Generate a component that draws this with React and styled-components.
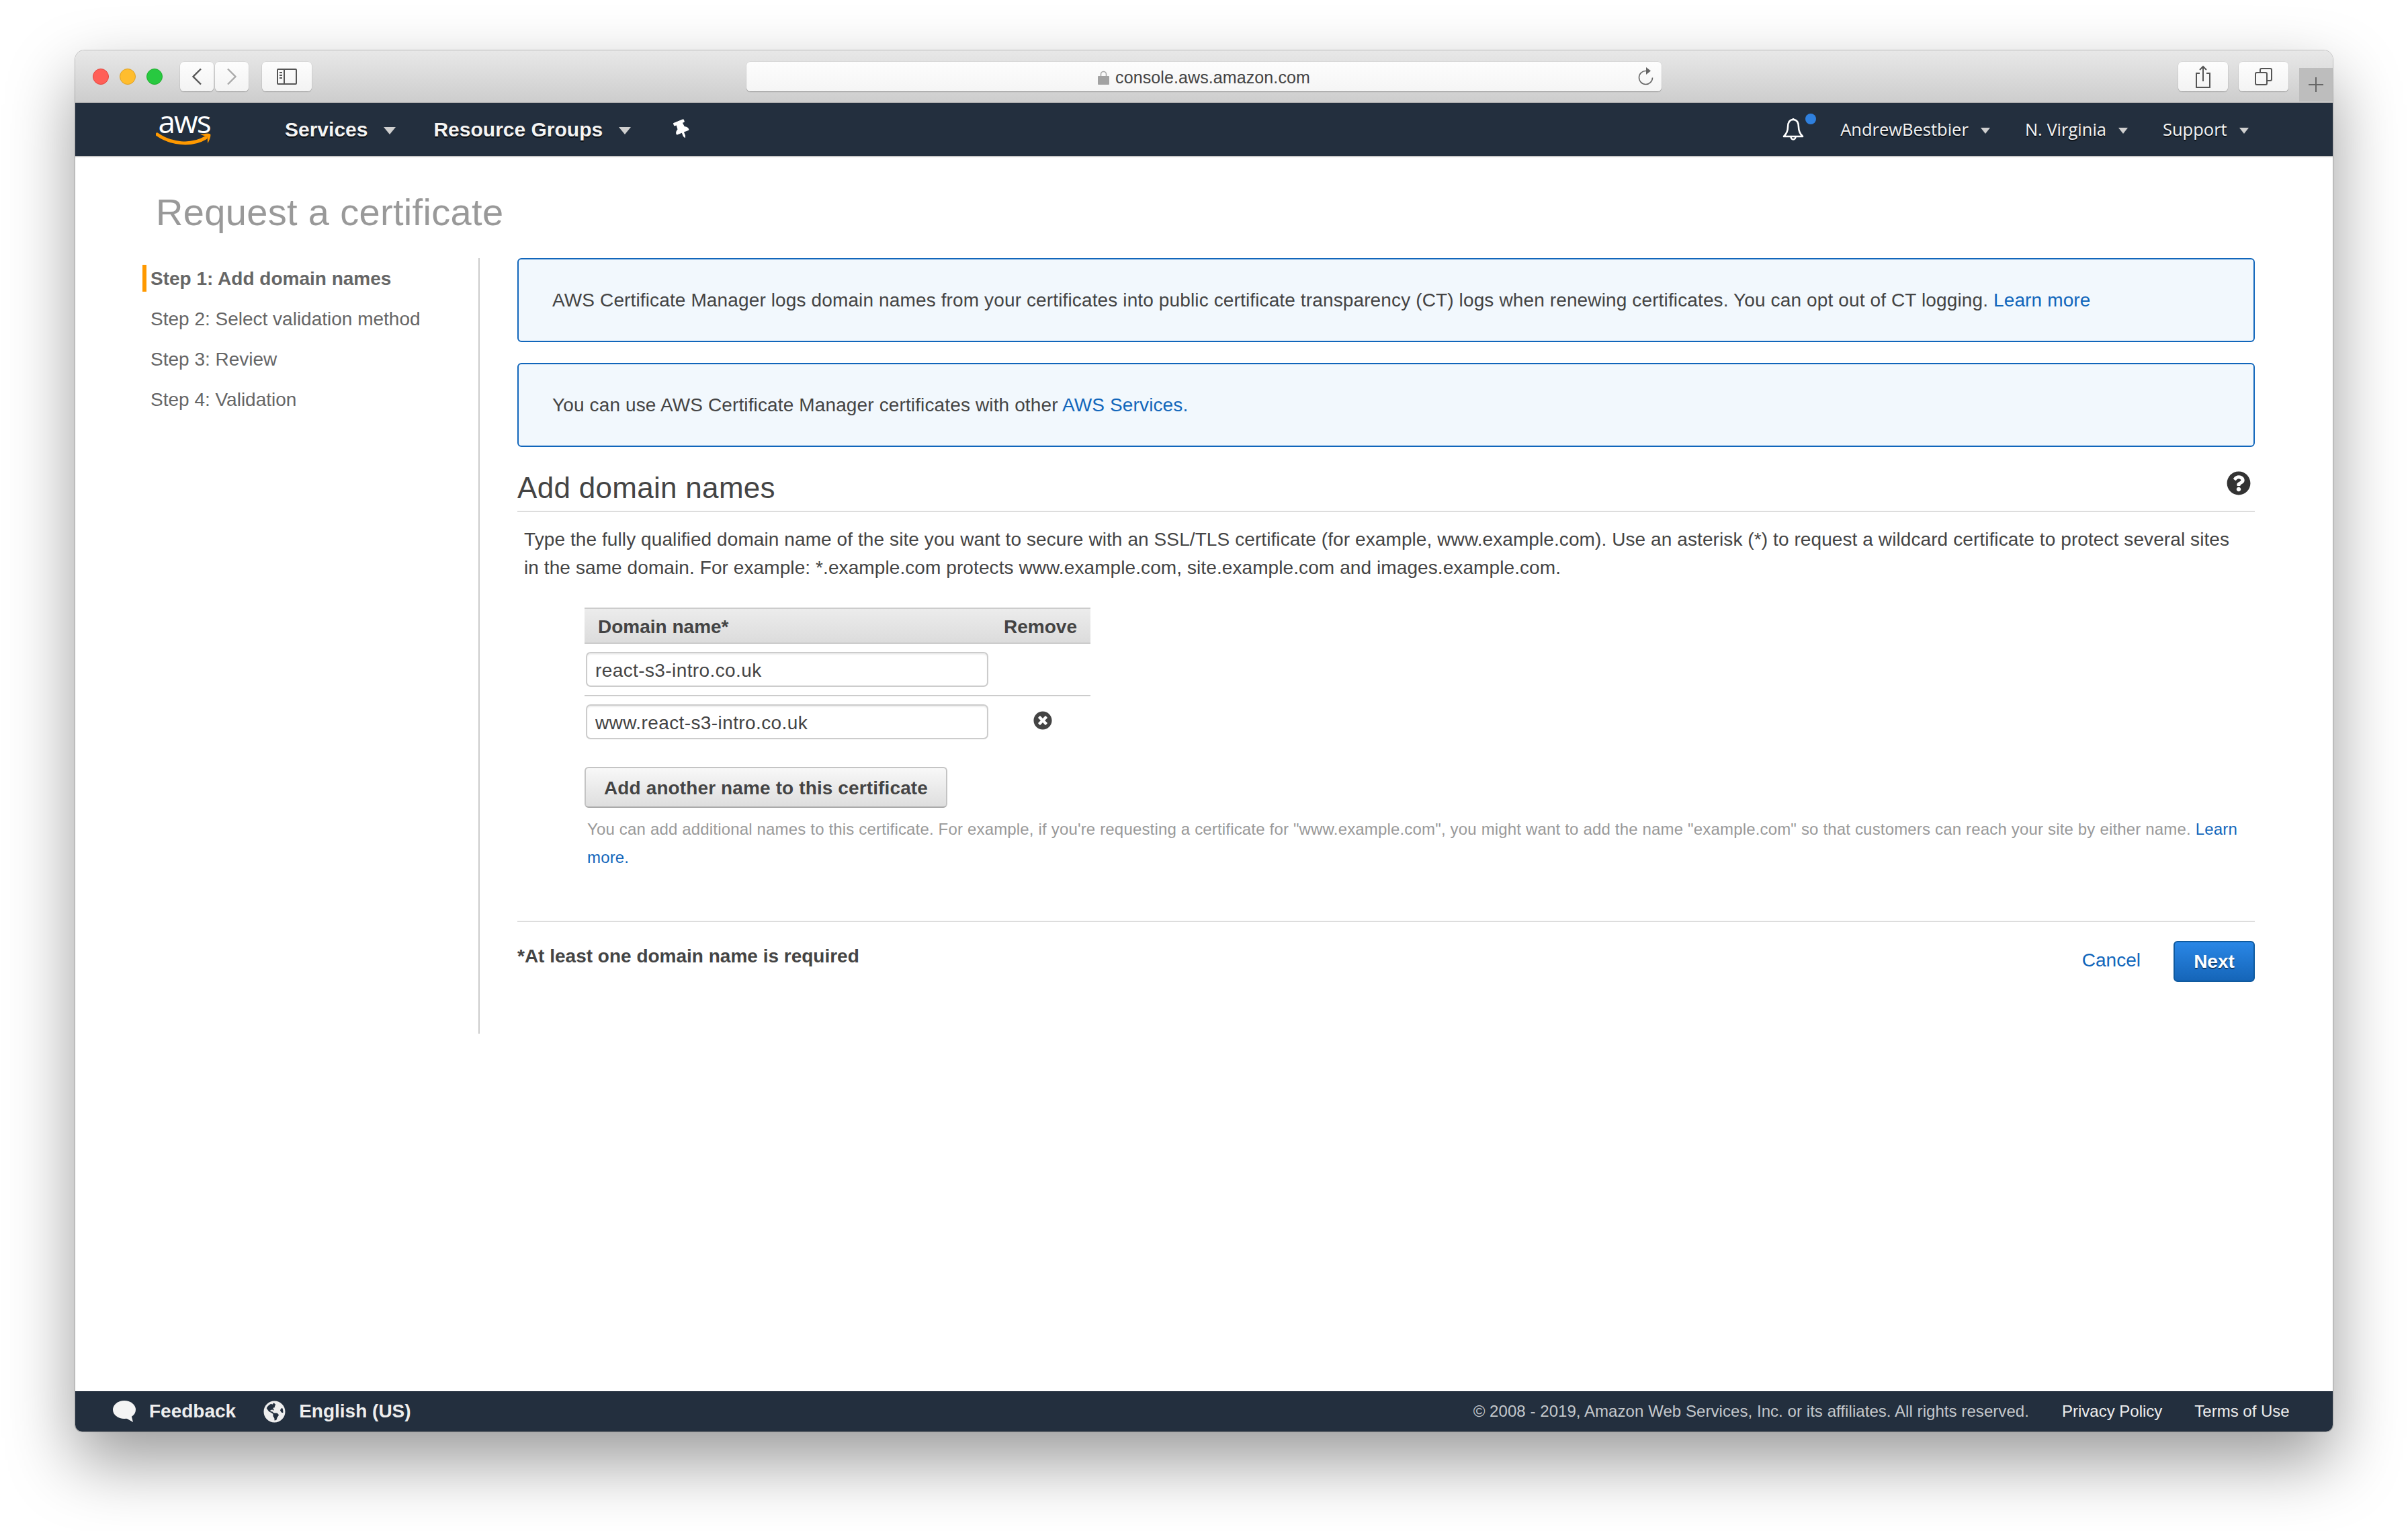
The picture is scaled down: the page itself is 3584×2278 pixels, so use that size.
import React from 'react';
import styled, { createGlobalStyle } from 'styled-components';
import { FaThumbtack, FaGlobeAmericas, FaQuestionCircle, FaTimesCircle } from 'react-icons/fa';

const Global = createGlobalStyle`
  html, body { margin: 0; padding: 0; background: #fff; overflow: hidden; }
  * { box-sizing: border-box; }
  body { font-family: "Liberation Sans", Arial, sans-serif; color: #444; }
`;

const Page = styled.div`
  width: 3584px; height: 2278px; padding: 75px 112px 148px; background: #fff;
`;
const Window = styled.div`
  height: 2055px; display: flex; flex-direction: column; background: #fff;
  border-radius: 14px 14px 10px 10px;
  box-shadow: 0 0 0 1px rgba(0,0,0,.22), 0 44px 100px rgba(0,0,0,.4);
`;
const Toolbar = styled.div`
  height: 78px; display: flex; align-items: flex-start; padding-top: 17px;
  background: linear-gradient(#e8e8e8, #cdcdcd);
  border-bottom: 1px solid #b4b4b4;
  border-radius: 14px 14px 0 0;
`;
const Lights = styled.div`
  height: 44px; display: flex; align-items: center; gap: 16px; margin: 0 26px;
`;
const Light = styled.span`
  width: 24px; height: 24px; border-radius: 50%;
  background: ${p => p.$c}; border: 1px solid ${p => p.$b};
`;
const ToolButton = styled.div`
  width: ${p => p.$w}px; height: 44px; margin-left: ${p => p.$ml || 0}px;
  display: flex; align-items: center; justify-content: center;
  background: linear-gradient(#fdfdfd, #f3f3f3);
  border-radius: 6px; box-shadow: 0 1px 1px rgba(0,0,0,.3), 0 0 0 .5px rgba(0,0,0,.08);
`;
const Address = styled.div`
  position: relative; width: 1362px; height: 44px; margin-left: 647px; padding-top: 2px;
  display: flex; align-items: center; justify-content: center; gap: 9px;
  background: linear-gradient(#fdfdfd, #f5f5f5);
  border-radius: 6px; box-shadow: 0 1px 1px rgba(0,0,0,.35), 0 0 0 .5px rgba(0,0,0,.08);
  font-size: 25px; color: #444; letter-spacing: .1px;
`;
const Reload = styled.svg`
  position: absolute; right: 12px; top: 7px;
`;
const PlusTab = styled.div`
  width: 50px; height: 50px; margin: 9px 0 0 16px;
  display: flex; align-items: center; justify-content: center;
  background: #bdbdbd;
`;
const Nav = styled.div`
  height: 81px; display: flex; align-items: center; background: #232f3e;
  border-bottom: 2px solid #c9c9c9; padding-left: 120px;
`;
const Logo = styled.div`
  width: 84px; margin: 0 108px 6px 0; display: flex; flex-direction: column; align-items: center;
  color: #fff; font-family: "Open Sans", sans-serif; font-size: 46px; line-height: 36px; letter-spacing: -2px;
`;
const LogoSmile = styled.svg`
  display: block; margin-top: -1px;
`;
const NavMain = styled.span`
  font-size: 30px; font-weight: 700; color: #f4f4f4;
  text-shadow: 0 2px 1px rgba(0,0,0,.75);
`;
const NavItem = styled.span`
  margin-bottom: 2px; font-family: "Open Sans", sans-serif; font-size: 25.500px; color: #f4f4f4;
  text-shadow: 0 2px 1px rgba(0,0,0,.7);
`;
const Caret = styled.span`
  width: 0; height: 0; margin: 4px ${p => p.$mr}px 0 ${p => p.$ml}px;
  border-left: ${p => p.$s}px solid transparent; border-right: ${p => p.$s}px solid transparent;
  border-top: ${p => p.$s + 2}px solid #cfcfcf;
`;
const PinWrap = styled.span`
  display: flex; margin-right: 1625px; color: #fff; transform: rotate(-22deg);
`;
const BellWrap = styled.span`
  position: relative; display: flex; width: 51px; margin-right: 35px;
`;
const Dot = styled.span`
  position: absolute; left: 34px; top: -6px; width: 16px; height: 16px; border-radius: 50%; background: #2f80de;
`;
const Body = styled.div`
  flex: 1; padding: 50px 116px 0 100px; display: flex; flex-direction: column;
`;
const Title = styled.h1`
  margin: 0 0 36px 20px; font-size: 56px; line-height: 64px; font-weight: 400; color: #999; letter-spacing: .33px;
`;
const Columns = styled.div`
  display: flex;
`;
const Side = styled.div`
  width: 502px; height: 1154px; padding-top: 10px; border-right: 2px solid #ccc;
  display: flex; flex-direction: column; gap: 20px;
`;
const Step = styled.div`
  height: 40px; line-height: 42px; font-size: 28px; color: #666; padding-left: 6px;
  border-left: 6px solid ${p => p.$active ? '#ff9900' : 'transparent'};
  font-weight: ${p => p.$active ? 700 : 400};
`;
const Content = styled.div`
  flex: 1; padding-left: 56px; min-width: 0;
`;
const Info = styled.div`
  height: 125px; margin-bottom: 31px; padding: 41px 50px 0; font-size: 28px; line-height: 40px; color: #444; letter-spacing: .13px;
  background: #f2f8fd; border: 2px solid #1166bb; border-radius: 6px;
`;
const Link = styled.a`
  color: #1166bb;
`;
const SectionHead = styled.div`
  display: flex; justify-content: space-between; margin-top: 36px; padding: 0 6px 9px 0;
  border-bottom: 2px solid #ddd;
`;
const H2 = styled.h2`
  margin: 0; font-size: 44px; line-height: 50px; font-weight: 400; color: #444; letter-spacing: .3px;
`;
const HelpWrap = styled.span`
  display: flex; color: #333;
`;
const Para = styled.p`
  margin: 20px 0 38px; padding: 0 10px; font-size: 28px; line-height: 42px; color: #444; letter-spacing: .09px;
`;
const Table = styled.div`
  width: 753px; margin-left: 100px;
`;
const THead = styled.div`
  height: 54px; display: flex; justify-content: space-between; align-items: center; padding: 3px 20px 0;
  background: linear-gradient(#ececec, #dcdcdc);
  border-top: 2px solid #ccc; border-bottom: 2px solid #ccc;
  font-size: 28px; font-weight: 700; color: #444;
`;
const Row = styled.div`
  display: flex; align-items: center; padding: 12px 0 12px 2px;
  border-bottom: ${p => p.$last ? '0' : '2px solid #ccc'};
`;
const Input = styled.input`
  width: 599px; height: 52px; padding: 3px 11px 0 12px; font: 28px "Liberation Sans", Arial, sans-serif; color: #444; letter-spacing: .4px;
  background: #fff; border: 2px solid #ccc; border-radius: 7px; outline: none;
  box-shadow: inset 0 2px 2px rgba(0,0,0,.07);
`;
const RemoveIcon = styled.span`
  display: flex; margin: -4px 0 0 67px; color: #444;
`;
const AddButton = styled.div`
  width: 540px; height: 61px; margin: 29px 0 11px 100px; padding-top: 2px; display: flex; align-items: center; justify-content: center;
  background: linear-gradient(#f8f8f8, #dedede);
  border: 2px solid #c4c4c4; border-bottom-color: #aaa; border-radius: 6px;
  font-size: 28px; font-weight: 700; color: #444; text-shadow: 0 1px 0 #fff; letter-spacing: .12px;
`;
const Hint = styled.p`
  margin: 0 0 73px 104px; width: 2465px; font-size: 24px; line-height: 42px; color: #999; letter-spacing: .17px;
`;
const FormFoot = styled.div`
  display: flex; justify-content: space-between; align-items: flex-start; padding-top: 28px; border-top: 2px solid #ddd;
`;
const Required = styled.div`
  padding-top: 3px; font-size: 28px; line-height: 40px; font-weight: 700; color: #444;
`;
const Actions = styled.div`
  display: flex; align-items: flex-start; gap: 49px;
`;
const Cancel = styled.a`
  margin-top: 9px; font-size: 28px; line-height: 40px; color: #1166bb;
`;
const Next = styled.div`
  width: 121px; height: 61px; padding-top: 1px; display: flex; align-items: center; justify-content: center;
  background: linear-gradient(#2a87e6, #1565b8); border: 2px solid #0f5a9f; border-radius: 6px;
  font-size: 28px; font-weight: 700; color: #fff; text-shadow: 0 2px 1px rgba(0,0,0,.5);
`;
const Footer = styled.div`
  height: 60px; display: flex; align-items: center; padding: 0 63px 0 56px; background: #232f3e;
  border-radius: 0 0 10px 10px; color: #eee;
`;
const FootStrong = styled.span`
  display: flex; align-items: center; margin-right: ${p => p.$mr}px; font-size: 28px; font-weight: 700;
`;
const FootIcon = styled.span`
  display: flex; margin-right: 20px;
`;
const FootNote = styled.span`
  font-size: 24px; color: ${p => p.$dim ? '#c4c8cc' : '#eee'}; margin-left: ${p => p.$ml || 0}px;
  letter-spacing: ${p => p.$dim ? '.06px' : '0'};
`;

export default function App() {
  return (
    <Page>
      <Global />
      <Window>
        <Toolbar>
          <Lights>
            <Light $c="#ff5f57" $b="#e2463f" />
            <Light $c="#ffbd2e" $b="#dea123" />
            <Light $c="#28c940" $b="#1dad2b" />
          </Lights>
          <ToolButton $w={50}>
            <svg width="16" height="26" viewBox="0 0 16 26" fill="none" stroke="#555" strokeWidth="2.4"><path d="M14 1.5 2.5 13 14 24.5" /></svg>
          </ToolButton>
          <ToolButton $w={50} $ml={2}>
            <svg width="16" height="26" viewBox="0 0 16 26" fill="none" stroke="#aaa" strokeWidth="2.4"><path d="M2 1.5 13.5 13 2 24.5" /></svg>
          </ToolButton>
          <ToolButton $w={74} $ml={20}>
            <svg width="30" height="24" viewBox="0 0 30 24" fill="none" stroke="#555" strokeWidth="2"><rect x="1" y="1" width="28" height="22" rx="1" /><path d="M11 1v22" /><path d="M4 6h4M4 10h4M4 14h4" /></svg>
          </ToolButton>
          <Address>
            <svg width="17" height="21" viewBox="0 0 17 21"><path d="M4.500 9V5.500a4 4 0 0 1 8 0V9" fill="none" stroke="#aaa" strokeWidth="1.6" /><rect y="8" width="17" height="13" rx="1" fill="#a2a2a2" /></svg>
            <span>console.aws.amazon.com</span>
            <Reload width="24" height="28" viewBox="0 0 24 28" fill="none"><path d="M13 6.500a10 10 0 1 0 9.500 10" stroke="#666" strokeWidth="1.6" /><path d="M13 1l7 5.500-7 5.500z" fill="#666" /></Reload>
          </Address>
          <ToolButton $w={74} $ml={769}>
            <svg width="24" height="34" viewBox="0 0 24 34" fill="none" stroke="#555" strokeWidth="2"><path d="M7 12H2v21h20V12h-5" /><path d="M12 24V2M7 7l5-5 5 5" /></svg>
          </ToolButton>
          <ToolButton $w={74} $ml={16}>
            <svg width="26" height="26" viewBox="0 0 26 26" fill="none" stroke="#555" strokeWidth="2"><rect x="1" y="7" width="17" height="18" rx="2" /><path d="M8 7V3a2 2 0 0 1 2-2h13a2 2 0 0 1 2 2v14a2 2 0 0 1-2 2h-5" /></svg>
          </ToolButton>
          <PlusTab>
            <svg width="24" height="24" viewBox="0 0 24 24" stroke="#666" strokeWidth="2"><path d="M12 1v22M1 12h22" /></svg>
          </PlusTab>
        </Toolbar>
        <Nav>
          <Logo>
            <span>aws</span>
            <LogoSmile width="84" height="20" viewBox="0 0 84 20" fill="none">
              <path d="M2 3c20 14 50 18 72 5" stroke="#ff9900" strokeWidth="5" strokeLinecap="round" />
              <path d="M66 3c6-1 13-2 15-.5 1.500 2-1.500 10-4 14 0-4 0-8-1-10-2-1-6-2-10-3.500z" fill="#ff9900" />
            </LogoSmile>
          </Logo>
          <NavMain>Services</NavMain>
          <Caret $s={9} $ml={24} $mr={56} />
          <NavMain>Resource Groups</NavMain>
          <Caret $s={9} $ml={24} $mr={62} />
          <PinWrap><FaThumbtack size={27} /></PinWrap>
          <BellWrap>
            <svg width="32" height="36" viewBox="0 0 32 36" fill="none" stroke="#fff" strokeWidth="2.600" strokeLinejoin="round">
              <path d="M16 3c-6 0-8 5-8 11 0 6-2 10-6 14h28c-4-4-6-8-6-14 0-6-2-11-8-11z" />
              <path d="M12.500 28a3.500 4.500 0 0 0 7 0" />
              <path d="M16 1v2" />
            </svg>
            <Dot />
          </BellWrap>
          <NavItem>AndrewBestbier</NavItem>
          <Caret $s={7} $ml={18} $mr={52} />
          <NavItem>N. Virginia</NavItem>
          <Caret $s={7} $ml={18} $mr={52} />
          <NavItem>Support</NavItem>
          <Caret $s={7} $ml={18} $mr={0} />
        </Nav>
        <Body>
          <Title>Request a certificate</Title>
          <Columns>
            <Side>
              <Step $active>Step 1: Add domain names</Step>
              <Step>Step 2: Select validation method</Step>
              <Step>Step 3: Review</Step>
              <Step>Step 4: Validation</Step>
            </Side>
            <Content>
              <Info>AWS Certificate Manager logs domain names from your certificates into public certificate transparency (CT) logs when renewing certificates. You can opt out of CT logging. <Link>Learn more</Link></Info>
              <Info>You can use AWS Certificate Manager certificates with other <Link>AWS Services.</Link></Info>
              <SectionHead>
                <H2>Add domain names</H2>
                <HelpWrap><FaQuestionCircle size={36} /></HelpWrap>
              </SectionHead>
              <Para>Type the fully qualified domain name of the site you want to secure with an SSL/TLS certificate (for example, www.example.com). Use an asterisk (*) to request a wildcard certificate to protect several sites in the same domain. For example: *.example.com protects www.example.com, site.example.com and images.example.com.</Para>
              <Table>
                <THead><span>Domain name*</span><span>Remove</span></THead>
                <Row><Input defaultValue="react-s3-intro.co.uk" readOnly /></Row>
                <Row $last><Input defaultValue="www.react-s3-intro.co.uk" readOnly /><RemoveIcon><FaTimesCircle size={28} /></RemoveIcon></Row>
              </Table>
              <AddButton>Add another name to this certificate</AddButton>
              <Hint>You can add additional names to this certificate. For example, if you're requesting a certificate for "www.example.com", you might want to add the name "example.com" so that customers can reach your site by either name. <Link>Learn more.</Link></Hint>
              <FormFoot>
                <Required>*At least one domain name is required</Required>
                <Actions>
                  <Cancel>Cancel</Cancel>
                  <Next>Next</Next>
                </Actions>
              </FormFoot>
            </Content>
          </Columns>
        </Body>
        <Footer>
          <FootStrong $mr={41}>
            <FootIcon>
              <svg width="34" height="32" viewBox="0 0 34 32" fill="#f4f4f4"><ellipse cx="17" cy="13.500" rx="17" ry="13.500" /><path d="M16 24l14 8-3-12z" /></svg>
            </FootIcon>
            Feedback
          </FootStrong>
          <FootStrong $mr={0}>
            <FootIcon><FaGlobeAmericas size={33} /></FootIcon>
            English (US)
          </FootStrong>
          <FootNote $dim $ml={1581}>© 2008 - 2019, Amazon Web Services, Inc. or its affiliates. All rights reserved.</FootNote>
          <FootNote $ml={49}>Privacy Policy</FootNote>
          <FootNote $ml={48}>Terms of Use</FootNote>
        </Footer>
      </Window>
    </Page>
  );
}
